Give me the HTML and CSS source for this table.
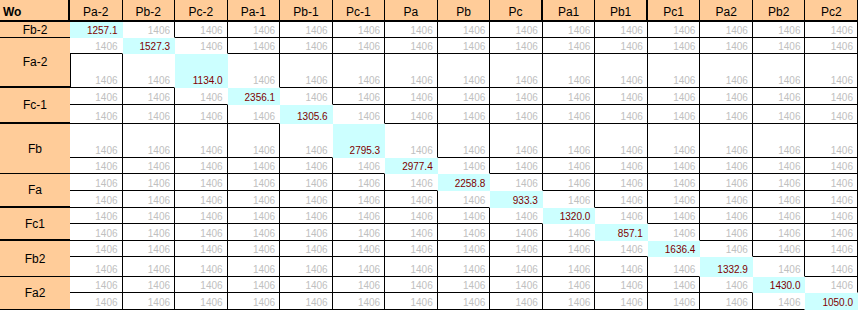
FILE: index.html
```html
<!DOCTYPE html>
<html>
<head>
<meta charset="utf-8">
<title>Wo</title>
<link rel="stylesheet" href="styles.css">
</head>
<body>
<div class="sheet">
  <!-- header -->
  <div class="hd corner tk">Wo</div>
  <div class="hd">Pa-2</div><div class="hd">Pb-2</div><div class="hd">Pc-2</div>
  <div class="hd">Pa-1</div><div class="hd">Pb-1</div><div class="hd">Pc-1</div>
  <div class="hd">Pa</div><div class="hd">Pb</div><div class="hd tk">Pc</div>
  <div class="hd">Pa1</div><div class="hd tk">Pb1</div><div class="hd">Pc1</div>
  <div class="hd">Pa2</div><div class="hd">Pb2</div><div class="hd">Pc2</div>

  <!-- r1 -->
  <div class="lb">Fb-2</div>
  <div class="c v">1257.1</div><div class="c nb">1406</div><div class="c">1406</div><div class="c">1406</div><div class="c">1406</div><div class="c">1406</div><div class="c">1406</div><div class="c">1406</div><div class="c">1406</div><div class="c">1406</div><div class="c">1406</div><div class="c">1406</div><div class="c">1406</div><div class="c">1406</div><div class="c">1406</div>

  <!-- r2 -->
  <div class="lb s2 tk">Fa-2</div>
  <div class="c nr">1406</div><div class="c v">1527.3</div><div class="c nb">1406</div><div class="c">1406</div><div class="c">1406</div><div class="c">1406</div><div class="c">1406</div><div class="c">1406</div><div class="c">1406</div><div class="c">1406</div><div class="c">1406</div><div class="c">1406</div><div class="c">1406</div><div class="c">1406</div><div class="c">1406</div>
  <!-- r3 -->
  <div class="c lft">1406</div><div class="c nr">1406</div><div class="c v">1134.0</div><div class="c nb">1406</div><div class="c">1406</div><div class="c">1406</div><div class="c">1406</div><div class="c">1406</div><div class="c">1406</div><div class="c">1406</div><div class="c">1406</div><div class="c">1406</div><div class="c">1406</div><div class="c">1406</div><div class="c">1406</div>

  <!-- r4 -->
  <div class="lb s2 tk">Fc-1</div>
  <div class="c">1406</div><div class="c">1406</div><div class="c nr">1406</div><div class="c v">2356.1</div><div class="c nb">1406</div><div class="c">1406</div><div class="c">1406</div><div class="c">1406</div><div class="c">1406</div><div class="c">1406</div><div class="c">1406</div><div class="c">1406</div><div class="c">1406</div><div class="c">1406</div><div class="c">1406</div>
  <!-- r5 -->
  <div class="c">1406</div><div class="c">1406</div><div class="c">1406</div><div class="c nr">1406</div><div class="c v">1305.6</div><div class="c nb">1406</div><div class="c">1406</div><div class="c">1406</div><div class="c">1406</div><div class="c">1406</div><div class="c">1406</div><div class="c">1406</div><div class="c">1406</div><div class="c">1406</div><div class="c">1406</div>

  <!-- r6 -->
  <div class="lb s2">Fb</div>
  <div class="c">1406</div><div class="c">1406</div><div class="c">1406</div><div class="c">1406</div><div class="c nr">1406</div><div class="c v">2795.3</div><div class="c nb">1406</div><div class="c">1406</div><div class="c">1406</div><div class="c">1406</div><div class="c">1406</div><div class="c">1406</div><div class="c">1406</div><div class="c">1406</div><div class="c">1406</div>
  <!-- r7 -->
  <div class="c">1406</div><div class="c">1406</div><div class="c">1406</div><div class="c">1406</div><div class="c">1406</div><div class="c nr">1406</div><div class="c v">2977.4</div><div class="c nb">1406</div><div class="c">1406</div><div class="c">1406</div><div class="c">1406</div><div class="c">1406</div><div class="c">1406</div><div class="c">1406</div><div class="c">1406</div>

  <!-- r8 -->
  <div class="lb s2 tk">Fa</div>
  <div class="c">1406</div><div class="c">1406</div><div class="c">1406</div><div class="c">1406</div><div class="c">1406</div><div class="c">1406</div><div class="c nr">1406</div><div class="c v">2258.8</div><div class="c nb">1406</div><div class="c">1406</div><div class="c">1406</div><div class="c">1406</div><div class="c">1406</div><div class="c">1406</div><div class="c">1406</div>
  <!-- r9 -->
  <div class="c">1406</div><div class="c">1406</div><div class="c">1406</div><div class="c">1406</div><div class="c">1406</div><div class="c">1406</div><div class="c">1406</div><div class="c nr">1406</div><div class="c v">933.3</div><div class="c nb">1406</div><div class="c">1406</div><div class="c">1406</div><div class="c">1406</div><div class="c">1406</div><div class="c">1406</div>

  <!-- r10 -->
  <div class="lb s2 tk">Fc1</div>
  <div class="c">1406</div><div class="c">1406</div><div class="c">1406</div><div class="c">1406</div><div class="c">1406</div><div class="c">1406</div><div class="c">1406</div><div class="c">1406</div><div class="c nr">1406</div><div class="c v">1320.0</div><div class="c nb">1406</div><div class="c">1406</div><div class="c">1406</div><div class="c">1406</div><div class="c">1406</div>
  <!-- r11 -->
  <div class="c">1406</div><div class="c">1406</div><div class="c">1406</div><div class="c">1406</div><div class="c">1406</div><div class="c">1406</div><div class="c">1406</div><div class="c">1406</div><div class="c">1406</div><div class="c nr">1406</div><div class="c v">857.1</div><div class="c nb">1406</div><div class="c">1406</div><div class="c">1406</div><div class="c">1406</div>

  <!-- r12 -->
  <div class="lb s2">Fb2</div>
  <div class="c">1406</div><div class="c">1406</div><div class="c">1406</div><div class="c">1406</div><div class="c">1406</div><div class="c">1406</div><div class="c">1406</div><div class="c">1406</div><div class="c">1406</div><div class="c">1406</div><div class="c nr">1406</div><div class="c v">1636.4</div><div class="c nb">1406</div><div class="c">1406</div><div class="c">1406</div>
  <!-- r13 -->
  <div class="c">1406</div><div class="c">1406</div><div class="c">1406</div><div class="c">1406</div><div class="c">1406</div><div class="c">1406</div><div class="c">1406</div><div class="c">1406</div><div class="c">1406</div><div class="c">1406</div><div class="c">1406</div><div class="c nr">1406</div><div class="c v">1332.9</div><div class="c nb">1406</div><div class="c">1406</div>

  <!-- r14 -->
  <div class="lb s2">Fa2</div>
  <div class="c">1406</div><div class="c">1406</div><div class="c">1406</div><div class="c">1406</div><div class="c">1406</div><div class="c">1406</div><div class="c">1406</div><div class="c">1406</div><div class="c">1406</div><div class="c">1406</div><div class="c">1406</div><div class="c">1406</div><div class="c nr">1406</div><div class="c v">1430.0</div><div class="c nb">1406</div>
  <!-- r15 -->
  <div class="c">1406</div><div class="c">1406</div><div class="c">1406</div><div class="c">1406</div><div class="c">1406</div><div class="c">1406</div><div class="c">1406</div><div class="c">1406</div><div class="c">1406</div><div class="c">1406</div><div class="c">1406</div><div class="c">1406</div><div class="c">1406</div><div class="c nr">1406</div><div class="c v">1050.0</div>
</div>
</body>
</html>
```

FILE: styles.css
```css
html, body {
  margin: 0;
  padding: 0;
  background: #ffffff;
}

body {
  font-family: "Liberation Sans", Arial, sans-serif;
  color: #000000;
}

.sheet {
  display: grid;
  width: 858px;
  grid-template-columns: 70px repeat(15, 1fr);
  grid-template-rows: 22px 16px 16px 34px 17px 19px 34px 16px 17px 17px 16px 17px 16px 20px 16px 17px;
}

.sheet > div {
  box-sizing: border-box;
  min-width: 0;
  white-space: nowrap;
  overflow: hidden;
}

/* header row */
.hd {
  background: #ffcc99;
  border-right: 1px solid #000000;
  border-bottom: 2px solid #000000;
  font-size: 12px;
  line-height: 15px;
  display: flex;
  align-items: flex-end;
  justify-content: center;
}

.hd.tk {
  border-right-width: 2px;
}

.hd.corner {
  justify-content: flex-start;
  padding-left: 3px;
  font-weight: bold;
}

/* row labels */
.lb {
  background: #ffcc99;
  border-bottom: 1px solid #000000;
  font-size: 12px;
  line-height: 14px;
  display: flex;
  align-items: center;
  justify-content: center;
}

.lb.tk {
  border-bottom-width: 2px;
}

.s2 {
  grid-row: span 2;
}

/* data cells */
.c {
  border-right: 1px solid #000000;
  border-bottom: 1px solid #000000;
  font-size: 10px;
  line-height: 12px;
  color: #c0c0c0;
  display: flex;
  align-items: flex-end;
  justify-content: flex-end;
  padding-right: 4px;
}

.c.nr {
  border-right-color: transparent;
}

.c.nb {
  border-bottom-color: transparent;
}

.c.lft {
  border-left: 1px solid #000000;
}

.c.v {
  background: #ccffff;
  color: #800000;
  border-right-color: transparent;
  border-bottom-color: transparent;
}
```
